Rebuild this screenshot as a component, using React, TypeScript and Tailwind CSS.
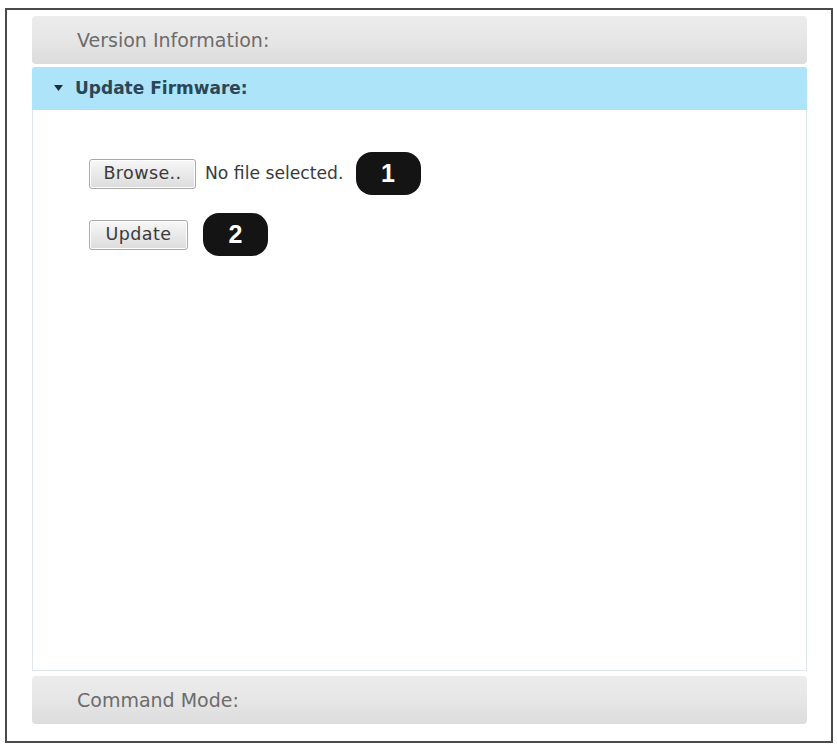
import React from "react";

const verdana = { fontFamily: '"DejaVu Sans", Verdana, sans-serif' };
const arial = { fontFamily: '"Liberation Sans", Arial, sans-serif' };

function Badge({ n }: { n: number }) {
  return (
    <span
      className="inline-flex h-[43px] w-[65px] items-center justify-center rounded-[16px] bg-[#141414] text-[25px] font-bold text-white"
      style={arial}
    >
      {n}
    </span>
  );
}

function GreyHeader({ label }: { label: string }) {
  return (
    <div className="flex h-[48px] items-center rounded-[4px] bg-gradient-to-b from-[#ececec] via-[#e6e6e6] to-[#dcdcdc] pl-[45px]">
      <span className="text-[19px] text-[#6c6c6c]" style={verdana}>
        {label}
      </span>
    </div>
  );
}

const btn =
  "h-[30px] rounded-[3px] border border-[#a9a9a9] bg-gradient-to-b from-[#f7f7f7] to-[#dcdcdc] text-[17.5px] tracking-[0.4px] text-[#3a3a3a] shadow-[inset_0_0_0_1px_#fff]";

export default function App() {
  return (
    <div className="h-[746px] w-[837px] bg-white pl-[5px] pt-[8px]">
      <div className="flex h-[735px] w-[828px] flex-col border-2 border-[#4a4a4a] pl-[25px] pr-[24px] pt-[6px]">
        <GreyHeader label="Version Information:" />

        <div className="mt-[3px] flex h-[43px] items-center gap-[12px] rounded-t-[3px] bg-[#ade4f9] pl-[22px]">
          <svg width="9" height="7" viewBox="0 0 9 7">
            <path d="M0 0 L9 0 L4.5 6 Z" fill="#1d2f3a" />
          </svg>
          <span className="text-[17px] font-bold text-[#2b4656]" style={verdana}>
            Update Firmware:
          </span>
        </div>

        <div className="flex h-[561px] flex-col gap-[18px] border border-t-0 border-[#dfe6ea] bg-white pl-[56px] pt-[42px]">
          <div className="flex items-center">
            <button className={`${btn} w-[107px]`} style={verdana}>
              Browse..
            </button>
            <span className="ml-[9px] text-[17.2px] text-[#3a3a3a]" style={verdana}>
              No file selected.
            </span>
            <span className="ml-[12px]">
              <Badge n={1} />
            </span>
          </div>
          <div className="flex items-center">
            <button className={`${btn} w-[99px]`} style={verdana}>
              Update
            </button>
            <span className="ml-[15px]">
              <Badge n={2} />
            </span>
          </div>
        </div>

        <div className="mt-[5px]">
          <GreyHeader label="Command Mode:" />
        </div>
      </div>
    </div>
  );
}
